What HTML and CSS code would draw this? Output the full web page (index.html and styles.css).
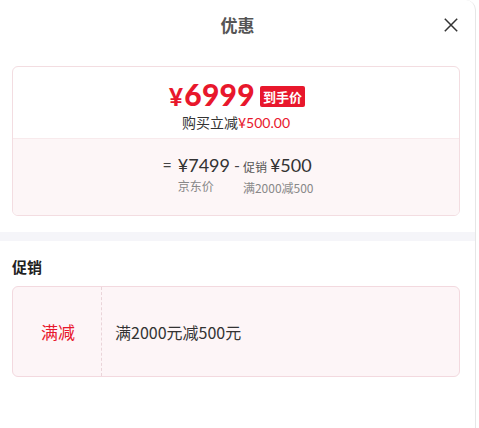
FILE: index.html
```html
<!DOCTYPE html>
<html lang="zh">
<head>
<meta charset="utf-8">
<link rel="stylesheet" href="styles.css">
</head>
<body>
<div class="panel">
  <div class="header">
    <div class="title">优惠</div>
    <svg class="close" width="14" height="14" viewBox="0 0 14 14"><path d="M0.8 0.8L13.2 13.2M13.2 0.8L0.8 13.2" stroke="#333" stroke-width="1.5" fill="none"/></svg>
  </div>
  <div class="content">
    <div class="card">
      <div class="card-top">
        <div class="final">
          <span class="final-price"><span class="yen">¥</span>6999</span>
          <span class="badge">到手价</span>
        </div>
        <div class="save">购买立减<span class="red">¥500.00</span></div>
      </div>
      <div class="card-bottom">
        <div class="calc">
          <span class="op">=</span>
          <div class="col">
            <div class="val">¥7499</div>
            <div class="lbl">京东价</div>
          </div>
          <span class="op minus">-</span>
          <div class="col">
            <div class="val"><span class="tag">促销</span>¥500</div>
            <div class="lbl">满2000减500</div>
          </div>
        </div>
      </div>
    </div>
  </div>
  <div class="sep"></div>
  <div class="section">
    <div class="sec-title">促销</div>
    <div class="promo">
      <div class="promo-type">满减</div>
      <div class="promo-desc">满2000元减500元</div>
    </div>
  </div>
</div>
</body>
</html>
```
FILE: styles.css
```css
html, body {
  margin: 0;
  padding: 0;
  background: #fff;
}
body {
  font-family: "Lato", "Noto Sans CJK SC", sans-serif;
  width: 479px;
  height: 428px;
  overflow: hidden;
}
.panel {
  width: 476px;
  height: 428px;
  background: #fff;
  border-right: 1px solid #e6e6e6;
  border-top-right-radius: 10px;
  box-sizing: border-box;
}
.header {
  height: 50px;
  display: flex;
  align-items: center;
  justify-content: center;
  position: relative;
}
.title {
  font-family: "Noto Sans CJK SC", sans-serif;
  font-size: 17px;
  font-weight: 700;
  color: #555;
  margin-top: -2px;
}
.close {
  position: absolute;
  right: 17px;
  top: 18px;
}
.content {
  padding: 16px 15px 16px 12px;
}
.card {
  border: 1px solid #f3dde1;
  border-radius: 6px;
  overflow: hidden;
}
.card-top {
  height: 71px;
  display: flex;
  flex-direction: column;
  align-items: center;
  padding-top: 14px;
  box-sizing: border-box;
}
.final {
  display: flex;
  align-items: center;
  height: 28px;
  margin-left: 2px;
}
.final-price {
  font-family: "Lato", sans-serif;
  font-weight: 900;
  font-size: 30px;
  color: #e8172c;
  line-height: 28px;
  letter-spacing: 0.3px;
}
.yen {
  font-size: 24px;
  margin-right: 1px;
}
.badge {
  margin-left: 5px;
  background: #e8172c;
  color: #fff;
  font-family: "Noto Sans CJK SC", sans-serif;
  font-weight: 700;
  font-size: 13px;
  height: 21px;
  line-height: 21px;
  padding: 0 3px;
  border-radius: 2px;
  margin-top: 3px;
}
.save {
  font-family: "Noto Sans CJK SC", sans-serif;
  font-size: 14px;
  color: #333;
  line-height: 18px;
  margin-top: 4px;
}
.red {
  color: #e8172c;
  font-family: "Lato", sans-serif;
}
.card-bottom {
  background: #fdf6f7;
  border-top: 1px solid #f8eaec;
  height: 77px;
  display: flex;
  justify-content: center;
  padding-top: 14px;
  box-sizing: border-box;
}
.calc {
  display: flex;
  align-items: flex-start;
  margin-left: 4px;
}
.op {
  font-size: 16px;
  color: #444;
  line-height: 24px;
  margin: 0 6px 0 0;
}
.minus {
  margin: 0 3px 0 4px;
}
.col {
  display: flex;
  flex-direction: column;
}
.val {
  font-family: "Lato", sans-serif;
  font-size: 18px;
  color: #333;
  line-height: 24px;
}
.tag {
  font-family: "Noto Sans CJK SC", sans-serif;
  font-size: 12px;
  color: #555;
  margin-right: 3px;
}
.lbl {
  font-family: "Noto Sans CJK SC", sans-serif;
  font-size: 12px;
  color: #888;
  line-height: 20px;
  margin-top: -1px;
}
.sep {
  height: 9px;
  background: #f5f5f9;
}
.section {
  padding: 16px 15px 0 12px;
}
.sec-title {
  font-family: "Noto Sans CJK SC", sans-serif;
  font-size: 15px;
  font-weight: 700;
  color: #222;
  line-height: 20px;
}
.promo {
  margin-top: 9px;
  height: 91px;
  background: #fdf5f7;
  border: 1px solid #f3d9df;
  border-radius: 6px;
  display: flex;
  box-sizing: border-box;
}
.promo-type {
  width: 89px;
  border-right: 1px dashed #ead4d9;
  display: flex;
  align-items: center;
  justify-content: center;
  font-family: "Noto Sans CJK SC", sans-serif;
  font-size: 17px;
  color: #e8172c;
  padding-left: 2px;
  box-sizing: border-box;
}
.promo-desc {
  display: flex;
  align-items: center;
  padding-left: 13px;
  font-family: "Noto Sans CJK SC", sans-serif;
  font-size: 16px;
  color: #333;
}
```
